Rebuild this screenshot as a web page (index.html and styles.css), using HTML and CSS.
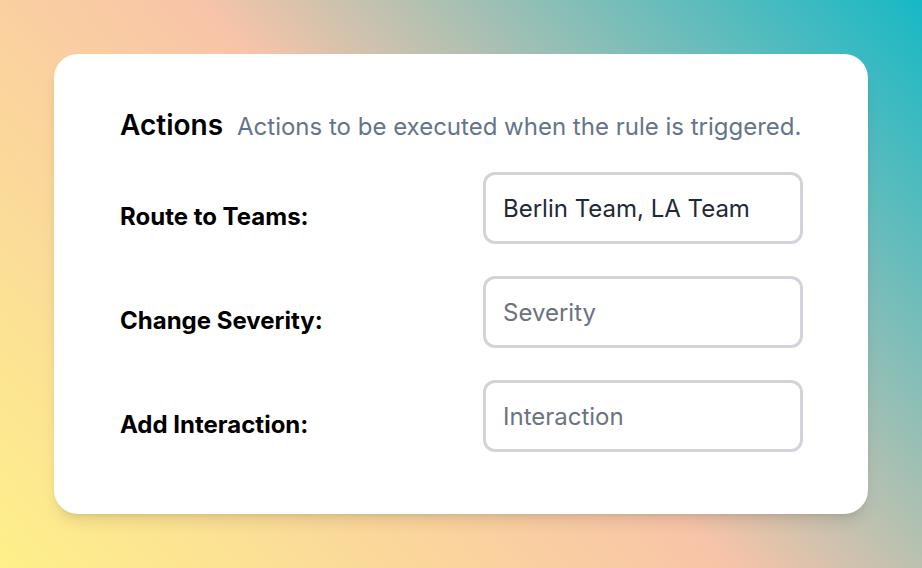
FILE: index.html
```html
<!DOCTYPE html>
<html lang="en">
<head>
<meta charset="utf-8">
<title>Actions</title>
<link rel="stylesheet" href="styles.css">
</head>
<body>
  <div class="card">
    <div class="header">
      <h2 class="title">Actions</h2>
      <p class="subtitle">Actions to be executed when the rule is triggered.</p>
    </div>
    <div class="rows">
      <label class="label" for="teams">Route to Teams:</label>
      <input class="field" id="teams" type="text" value="Berlin Team, LA Team">
      <label class="label" for="severity">Change Severity:</label>
      <input class="field" id="severity" type="text" placeholder="Severity">
      <label class="label" for="interaction">Add Interaction:</label>
      <input class="field" id="interaction" type="text" placeholder="Interaction">
    </div>
  </div>
</body>
</html>
```

FILE: styles.css
```css
* { box-sizing: border-box; }

html, body {
  margin: 0;
  height: 100%;
}

body {
  width: 922px;
  height: 568px;
  padding: 54px;
  font-family: Inter, "Noto Sans", sans-serif;
  background: linear-gradient(47deg, #fef08a 0%, #f8c4a8 50%, #17b8c6 100%);
  overflow: hidden;
}

.card {
  width: 814px;
  height: 460px;
  background: #ffffff;
  border-radius: 24px;
  padding: 53px 65px 62px 66px;
  box-shadow: 0 10px 15px -3px rgba(0, 0, 0, 0.1), 0 4px 6px -4px rgba(0, 0, 0, 0.1);
}

.header {
  display: flex;
  align-items: baseline;
  gap: 14px;
  height: 36px;
  margin-bottom: 29px;
}

.title {
  margin: 0;
  font-size: 28px;
  line-height: 36px;
  font-weight: 600;
  color: #000000;
}

.subtitle {
  margin: 0;
  font-size: 24px;
  line-height: 36px;
  font-weight: 400;
  color: #64748b;
  white-space: nowrap;
}

.rows {
  display: grid;
  grid-template-columns: 1fr 320px;
  row-gap: 32px;
  align-items: center;
}

.label {
  margin-top: 16px;
  font-size: 24px;
  font-weight: 700;
  color: #000000;
}

.field {
  width: 320px;
  height: 72px;
  margin: 0;
  padding: 0 17px;
  border: 3px solid #d1d5db;
  border-radius: 12px;
  background: #ffffff;
  font-family: Inter, "Noto Sans", sans-serif;
  font-size: 24px;
  color: #1f2937;
  outline: none;
}

.field::placeholder {
  color: #6b7280;
  opacity: 1;
}
```
